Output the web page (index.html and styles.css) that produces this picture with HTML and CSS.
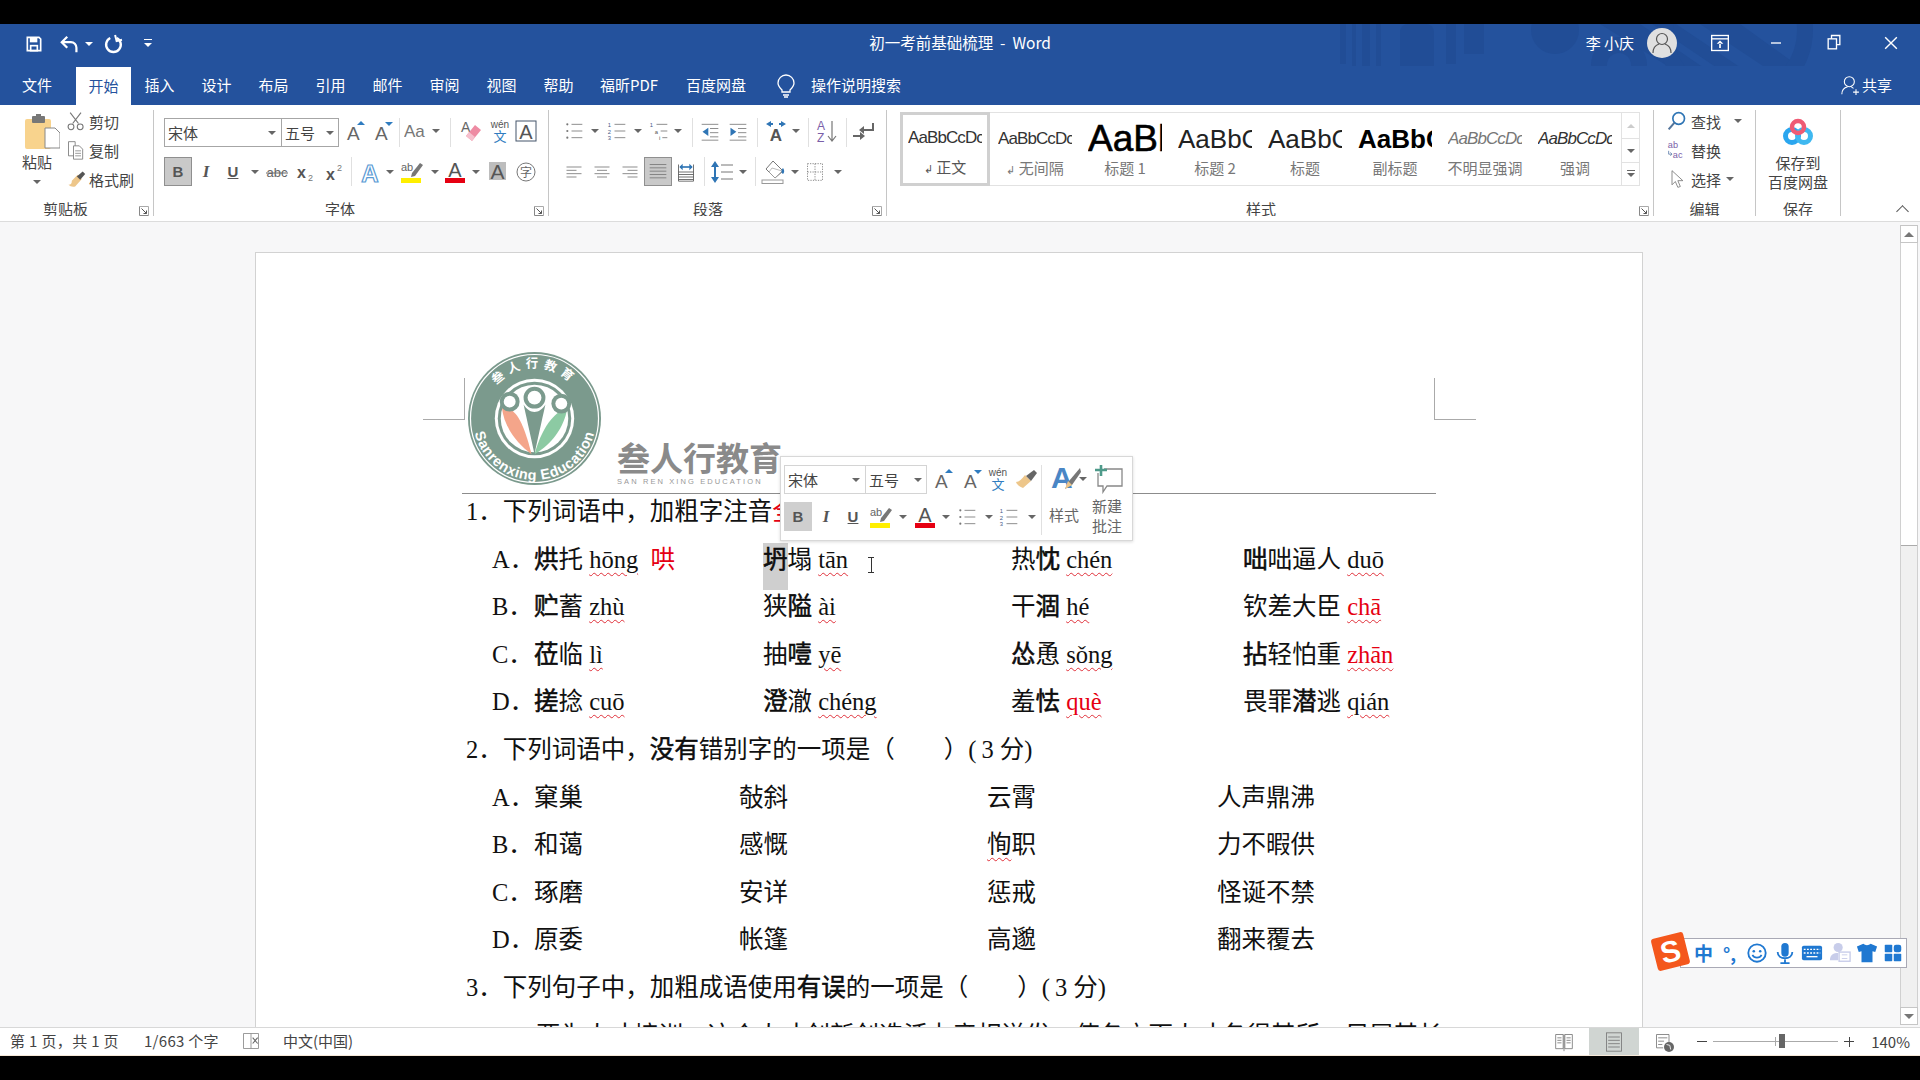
FILE: index.html
```html
<!DOCTYPE html>
<html lang="zh-CN">
<head>
<meta charset="utf-8">
<title>初一考前基础梳理 - Word</title>
<link rel="stylesheet" href="styles.css">
</head>
<body>
<svg class="defs" xmlns="http://www.w3.org/2000/svg">
  <defs>
    <symbol id="i-save" viewBox="0 0 24 24"><path d="M4 4h14l2 2v14H4z" fill="none" stroke="#fff" stroke-width="2"/><rect x="7" y="4" width="9" height="6" fill="#fff"/><rect x="8" y="14" width="8" height="6" fill="none" stroke="#fff" stroke-width="2"/></symbol>
    <symbol id="i-undo" viewBox="0 0 24 24"><path d="M9 4L3 10l6 6" fill="none" stroke="#fff" stroke-width="2.4"/><path d="M4 10h9a6 6 0 0 1 6 6v5" fill="none" stroke="#fff" stroke-width="2.4"/></symbol>
    <symbol id="i-redo" viewBox="0 0 24 24"><path d="M9 5.500a8 8 0 1 0 7 0" fill="none" stroke="#fff" stroke-width="2.600"/><path d="M15 2v7h6" fill="none" stroke="#fff" stroke-width="2.200" transform="rotate(-14 15 5)"/></symbol>
    <symbol id="i-grow" viewBox="0 0 24 24"><text x="3" y="21" class="t" font-size="19" fill="#666">A</text><path d="M17 2l4 4h-8z" fill="#2f7cc0"/></symbol>
    <symbol id="i-shrink" viewBox="0 0 24 24"><text x="3" y="21" class="t" font-size="19" fill="#666">A</text><path d="M13 3h8l-4 4z" fill="#2f7cc0"/></symbol>
    <symbol id="i-aa" viewBox="0 0 24 24"><text x="0" y="18" class="t" font-size="17" fill="#777">Aa</text></symbol>
    <symbol id="i-eraser" viewBox="0 0 24 24"><text x="1" y="13" class="t" font-size="14" fill="#666">A</text><path d="M15 6l6 5-9 11-6-5z" fill="#ee8ba3"/><path d="M6 17l6 5 3-4-6-5z" fill="#f6c0cd"/></symbol>
    <symbol id="i-wen" viewBox="0 0 24 24"><text x="12" y="9" class="t" font-size="10" fill="#555" text-anchor="middle">wén</text><text x="12" y="22" class="t" font-size="13" fill="#2f7cc0" text-anchor="middle">文</text></symbol>
    <symbol id="i-boxa" viewBox="0 0 24 24"><rect x="2" y="2" width="20" height="20" fill="none" stroke="#44546a" stroke-width="1"/><text x="12" y="20" class="t" font-size="20" fill="#555" text-anchor="middle">A</text></symbol>
    <symbol id="i-abc" viewBox="0 0 24 24"><text x="12" y="17" class="t" font-size="13" fill="#666" text-anchor="middle">abc</text><path d="M1 13h22" stroke="#666" stroke-width="1"/></symbol>
    <symbol id="i-sub" viewBox="0 0 24 24"><text x="2" y="18" class="t b" font-size="16" fill="#555">x</text><text x="13" y="21" class="t" font-size="9" fill="#777">2</text></symbol>
    <symbol id="i-sup" viewBox="0 0 24 24"><text x="2" y="20" class="t b" font-size="16" fill="#555">x</text><text x="13" y="11" class="t" font-size="9" fill="#777">2</text></symbol>
    <symbol id="i-ae" viewBox="0 0 24 24"><text x="12" y="22" class="t b" font-size="24" fill="#fff" stroke="#5b9bd5" stroke-width="1.200" text-anchor="middle">A</text></symbol>
    <symbol id="i-hl" viewBox="0 0 24 24"><text x="1" y="11" class="t" font-size="11" fill="#666">ab</text><path d="M20 3l3 2-8 11-4 1 1-4z" fill="#777"/><rect x="1" y="18" width="20" height="5" fill="#ffef00"/></symbol>
    <symbol id="i-ar" viewBox="0 0 24 24"><text x="12" y="17" class="t" font-size="20" fill="#555" text-anchor="middle">A</text><rect x="2" y="18" width="20" height="5" fill="#e60012"/></symbol>
    <symbol id="i-ag" viewBox="0 0 24 24"><rect x="4" y="2" width="17" height="18" fill="#bdbdbd"/><text x="12.500" y="19" class="t" font-size="21" fill="#555" text-anchor="middle">A</text></symbol>
    <symbol id="i-zi" viewBox="0 0 24 24"><circle cx="12" cy="12" r="9" fill="none" stroke="#777"/><text x="12" y="17" class="t" font-size="12" fill="#666" text-anchor="middle">字</text></symbol>
    <symbol id="i-bul" viewBox="0 0 24 24"><g fill="#777"><circle cx="4" cy="4" r="1.300"/><circle cx="4" cy="12" r="1.300"/><circle cx="4" cy="20" r="1.300"/></g><path d="M9 4h13M9 12h13M9 20h13" stroke="#777"/></symbol>
    <symbol id="i-num" viewBox="0 0 24 24"><g class="t" font-size="7" fill="#44598a"><text x="1" y="7">1</text><text x="1" y="15">2</text><text x="1" y="23">3</text></g><path d="M9 4h13M9 12h13M9 20h13" stroke="#777"/></symbol>
    <symbol id="i-ml" viewBox="0 0 24 24"><g class="t" font-size="7" fill="#44598a"><text x="1" y="7">1</text></g><g class="t" font-size="7" fill="#555"><text x="7" y="15">a</text><text x="12" y="23">i</text></g><path d="M9 4h13M14 12h8M16 20h6" stroke="#777"/></symbol>
    <symbol id="i-out" viewBox="0 0 24 24"><path d="M2 4h20M12 9h10M12 14h10M12 19h10M2 23h20" stroke="#777"/><path d="M10 8v10l-7-5z" fill="#2f75b5"/></symbol>
    <symbol id="i-ind" viewBox="0 0 24 24"><path d="M2 4h20M12 9h10M12 14h10M12 19h10M2 23h20" stroke="#777"/><path d="M3 8v10l7-5z" fill="#2f75b5"/></symbol>
    <symbol id="i-xl" viewBox="0 0 24 24"><text x="12" y="22" class="t b" font-size="17" fill="#555" text-anchor="middle">A</text><path d="M2 5l5-3v2h2v2H7v2zM22 5l-5-3v2h-2v2h2v2z" fill="#2f75b5"/></symbol>
    <symbol id="i-sort" viewBox="0 0 24 24"><text x="1" y="11" class="t" font-size="12" fill="#7a5ea8">A</text><text x="1" y="23" class="t" font-size="12" fill="#7a5ea8">Z</text><path d="M16 2v20M12 17l4 5 4-5" fill="none" stroke="#777" stroke-width="1.200"/></symbol>
    <symbol id="i-show" viewBox="0 0 24 24"><path d="M22 4v7H12" fill="none" stroke="#666" stroke-width="2"/><path d="M13 7l-5 4 5 4z" fill="#666"/><path d="M2 17h8" stroke="#666" stroke-width="2"/><path d="M9 13l5 4-5 4z" fill="#666"/></symbol>
    <symbol id="i-al" viewBox="0 0 24 24"><path d="M3 6h18M3 10h12M3 14h18M3 18h12" stroke="#777"/></symbol>
    <symbol id="i-ac" viewBox="0 0 24 24"><path d="M3 6h18M6 10h12M3 14h18M6 18h12" stroke="#777"/></symbol>
    <symbol id="i-ar2" viewBox="0 0 24 24"><path d="M3 6h18M9 10h12M3 14h18M9 18h12" stroke="#777"/></symbol>
    <symbol id="i-aj" viewBox="0 0 24 24"><path d="M2 3h20M2 7h20M2 11h20M2 15h20M2 19h20" stroke="#777"/></symbol>
    <symbol id="i-dist" viewBox="0 0 24 24"><path d="M3 3v20M21 3v20M3 12h18M3 15h18M3 18h18M3 21h18M3 23h18" stroke="#555"/><path d="M5 6h14" stroke="#2f75b5" stroke-width="2"/><path d="M8 2v8L4 6zM16 2v8l4-4z" fill="#2f75b5"/></symbol>
    <symbol id="i-ls" viewBox="0 0 24 24"><path d="M11 5h12M11 12h12M11 19h12" stroke="#777"/><path d="M5 6v12" stroke="#2f75b5" stroke-width="2"/><path d="M1 7l4-6 4 6zM1 17l4 6 4-6z" fill="#2f75b5"/></symbol>
    <symbol id="i-fill" viewBox="0 0 24 24"><path d="M12 1l10 10-8 7-9-9z" fill="#fff" stroke="#777"/><path d="M11 8l10 3-7 7-6-6z" fill="#fff" stroke="#777" stroke-width=".5"/><path d="M22 8c2 3 1 5 0 6-2-1-2-4 0-6z" fill="#2f75b5"/><rect x="1" y="20" width="21" height="3.500" fill="#fff" stroke="#999"/></symbol>
    <symbol id="i-bd" viewBox="0 0 24 24"><path d="M3 2h18v20H3zM12 2v20M3 12h18" fill="none" stroke="#777" stroke-dasharray="1.500 1.500"/></symbol>
    <symbol id="i-paste" viewBox="0 0 36 36"><rect x="1" y="5" width="26" height="30" rx="2" fill="#f8d38d"/><rect x="8" y="2" width="13" height="7" rx="1" fill="#777"/><rect x="12" y="0" width="5" height="4" fill="#777"/><path d="M21 20h10l5 5v15H21z" fill="#fff" stroke="#888" transform="translate(0 -6)"/></symbol>
    <symbol id="i-cut" viewBox="0 0 24 24"><path d="M5 2l10 13M18 2L8 15" stroke="#777" stroke-width="1.400" fill="none"/><circle cx="6" cy="19" r="3.500" fill="none" stroke="#777" stroke-width="1.300"/><circle cx="17" cy="19" r="3.500" fill="none" stroke="#777" stroke-width="1.300"/></symbol>
    <symbol id="i-copy" viewBox="0 0 24 24"><path d="M3 2h8v17H3z" fill="#fff" stroke="#777"/><path d="M9 7h7l4 4v12H9z" fill="#fff" stroke="#777"/><path d="M11 13h7M11 16h7M11 19h7" stroke="#888"/></symbol>
    <symbol id="i-brush" viewBox="0 0 24 24"><path d="M14 7l5 5-8 9c-3 1-6 0-8-2 3 0 4-2 4-5z" fill="#edc68a"/><path d="M13 9l4 4 6-7-3-3z" fill="#555"/></symbol>
    <symbol id="i-launch" viewBox="0 0 10 10"><path d="M.5.5h9v9" fill="none" stroke="#aaa"/><path d="M.5.500v9h9" fill="none" stroke="#888"/><path d="M2.500 2.500l5 5M7.500 4.500v3h-3" fill="none" stroke="#555"/></symbol>
    <symbol id="i-find" viewBox="0 0 24 24"><circle cx="14" cy="9" r="7" fill="none" stroke="#2f75b5" stroke-width="2"/><path d="M9 14l-7 8" stroke="#54759b" stroke-width="2.500"/></symbol>
    <symbol id="i-rep" viewBox="0 0 24 24"><text x="1" y="10" class="t" font-size="11" fill="#7a5ea8">ab</text><text x="7" y="21" class="t" font-size="11" fill="#7a5ea8">ac</text><path d="M2 13v4h4M4 15l2 2-2 2" fill="none" stroke="#5c7ca8"/></symbol>
    <symbol id="i-sel" viewBox="0 0 24 24"><path d="M6 2v17l4-4 3 7 3-1-3-7h6z" fill="#fff" stroke="#777"/></symbol>
    <symbol id="i-baidu" viewBox="0 0 30 30"><circle cx="9" cy="19" r="6.500" fill="none" stroke="#2aa6ef" stroke-width="5"/><circle cx="21" cy="19" r="6.500" fill="none" stroke="#3fb8f0" stroke-width="5"/><circle cx="15" cy="10" r="6" fill="none" stroke="#ef5b74" stroke-width="4.500"/></symbol>
    <symbol id="i-bulb" viewBox="0 0 24 24"><path d="M8 16c-2-2-4-4-4-7a8 8 0 0 1 16 0c0 3-2 5-4 7v2H8z" fill="none" stroke="#fff" stroke-width="1.300"/><path d="M9 21h6M10 23h4" stroke="#fff" stroke-width="1.300"/></symbol>
    <symbol id="i-share" viewBox="0 0 24 24"><circle cx="10" cy="8" r="6" fill="none" stroke="#fff" stroke-width="1.300"/><path d="M1 23c0-5 3-8 7-9M12 14l3 2" fill="none" stroke="#fff" stroke-width="1.300"/><path d="M18 17v7M14.500 20.500h7" stroke="#fff" stroke-width="1.300"/></symbol>
    <symbol id="i-user" viewBox="0 0 30 30"><circle cx="15" cy="15" r="15" fill="#e0e0e0"/><circle cx="15" cy="11" r="5.500" fill="none" stroke="#555" stroke-width="1.200"/><path d="M6 25c0-5 3-8 6-9M24 25c0-5-3-8-6-9" fill="none" stroke="#555" stroke-width="1.200"/></symbol>
    <symbol id="i-rd" viewBox="0 0 24 24"><rect x="2" y="3" width="20" height="18" fill="none" stroke="#fff" stroke-width="1.600"/><path d="M2 7h20" stroke="#fff" stroke-width="1.600"/><path d="M12 9l-4 4h8zM11 12h2v6h-2z" fill="#fff"/></symbol>
    <symbol id="i-min" viewBox="0 0 24 24"><path d="M6 12h12" stroke="#fff" stroke-width="1.600"/></symbol>
    <symbol id="i-rest" viewBox="0 0 24 24"><path d="M9 7V3h10v11h-4" fill="none" stroke="#fff" stroke-width="1.600"/><rect x="5" y="7" width="10" height="12" fill="none" stroke="#fff" stroke-width="1.600"/></symbol>
    <symbol id="i-x" viewBox="0 0 24 24"><path d="M5 5l14 14M19 5L5 19" stroke="#fff" stroke-width="1.700"/></symbol>
    <symbol id="i-book" viewBox="0 0 24 24"><path d="M2 3h9v17H2zM13 3h9v17h-9z" fill="none" stroke="#777"/><path d="M4 7h5M4 10h5M4 13h5M15 7h5M15 10h5M15 13h5M12 3v20" stroke="#777"/></symbol>
    <symbol id="i-pr" viewBox="0 0 24 24"><rect x="3" y="1" width="18" height="22" fill="none" stroke="#777"/><path d="M5 6h14M5 10h14M5 14h14M5 18h14" stroke="#777"/></symbol>
    <symbol id="i-web" viewBox="0 0 24 24"><path d="M3 3h15v10M3 3v16h8" fill="none" stroke="#777"/><path d="M5 7h11M5 11h7M5 15h5" stroke="#777"/><circle cx="18" cy="18" r="6" fill="#666"/><path d="M15 15l4 1 1 5" stroke="#fff" fill="none"/></symbol>
    <symbol id="i-proof" viewBox="0 0 24 24"><path d="M12 3H3v18h9zM12 3h9v18h-9" fill="none" stroke="#888"/><path d="M14 8l6 7M20 8l-6 7" stroke="#666" stroke-width="1.300"/></symbol>
    <symbol id="i-sty" viewBox="0 0 30 30"><text x="0" y="24" class="t b" font-size="30" fill="#4a86c5">A</text><path d="M29 4l-11 13-4 8 7-4L30 8z" fill="#777"/><path d="M14 25l7-4-4-4z" fill="#edc68a"/></symbol>
    <symbol id="i-com" viewBox="0 0 30 30"><path d="M10 5h18v17H13l-4 6v-6H4V9" fill="none" stroke="#888" stroke-width="1.300"/><path d="M7 1v11M1 6h12" stroke="#4e9a8a" stroke-width="2.600"/></symbol>
    <symbol id="i-mini-brush" viewBox="0 0 24 24"><path d="M11 8l6 6-8 7c-3-1-6-3-7-6 3 0 6-3 9-7z" fill="#edc68a"/><path d="M12 9l5 5 6-8-3-3z" fill="#666"/></symbol>
    <symbol id="i-smile" viewBox="0 0 24 24"><circle cx="12" cy="12" r="9.500" fill="none" stroke="#1f78d1" stroke-width="2"/><circle cx="8.500" cy="10" r="1.400" fill="#1f78d1"/><circle cx="15.500" cy="10" r="1.400" fill="#1f78d1"/><path d="M7 14c2 4 8 4 10 0" fill="none" stroke="#1f78d1" stroke-width="1.800"/></symbol>
    <symbol id="i-mic" viewBox="0 0 24 24"><rect x="8" y="1" width="8" height="15" rx="4" fill="#1f78d1"/><path d="M4 11c0 9 16 9 16 0M12 19v4M7 23h10" fill="none" stroke="#1f78d1" stroke-width="2"/></symbol>
    <symbol id="i-kb" viewBox="0 0 24 24"><rect x="1" y="4" width="22" height="16" rx="2" fill="#1f78d1"/><path d="M3 8h18M3 12h18" stroke="#fff" stroke-dasharray="2 1.500" stroke-width="1.500"/><path d="M6 16h12" stroke="#fff" stroke-width="1.500"/></symbol>
    <symbol id="i-sg-u" viewBox="0 0 24 24"><circle cx="10" cy="6" r="5" fill="#c8cdea"/><path d="M1 20c0-6 4-8 9-8v8z" fill="#c8cdea"/><rect x="11" y="11" width="12" height="10" fill="#fff" stroke="#c8cdea" stroke-width="1.500"/><path d="M14 14h6M14 18h6" stroke="#c8cdea"/></symbol>
    <symbol id="i-shirt" viewBox="0 0 24 24"><path d="M8 2c2 2 6 2 8 0l7 3-2 6-3-1v12H6V10l-3 1-2-6z" fill="#1f78d1"/></symbol>
    <symbol id="i-grid" viewBox="0 0 24 24"><g fill="#1f78d1"><rect x="1" y="1" width="10" height="10" rx="1"/><rect x="13" y="1" width="10" height="10" rx="3"/><rect x="1" y="13" width="10" height="10" rx="1"/><rect x="13" y="13" width="10" height="10" rx="1"/></g></symbol>
  </defs>
</svg>

<div class="app">
  <div class="black-top"></div>

  <header class="titlebar">
    <svg class="watermark" viewBox="0 0 580 81" aria-hidden="true">
      <g fill="#214d96">
        <rect x="0" y="0" width="6" height="40"/><rect x="12" y="0" width="4" height="52"/><rect x="22" y="0" width="8" height="62"/><rect x="36" y="0" width="5" height="50"/>
        <rect x="60" y="0" width="34" height="62" rx="8"/><rect x="106" y="0" width="10" height="40"/><rect x="124" y="0" width="20" height="30"/><circle cx="215" cy="6" r="24"/>
        <circle cx="279" cy="41" r="28"/><path d="M260 0l130 81h28L300 0zM312 0l120 81h24L336 0zM360 0l90 60v-24L400 0z"/>
      </g>
      <circle cx="279" cy="41" r="12" fill="#24529d"/>
      <circle cx="395" cy="6" r="70" fill="none" stroke="#214d96" stroke-width="16"/>
    </svg>
    <div class="qat">
      <span class="c w24"><svg class="s20"><use href="#i-save"/></svg></span>
      <span class="c w10"></span><span class="c w28"><svg class="s22"><use href="#i-undo"/></svg></span>
      <span class="c w10"><i class="dd dd-w"></i></span>
      <span class="c w38"><svg class="s22"><use href="#i-redo"/></svg></span>
      <span class="c w32"><i class="qat-more"></i></span>
    </div>
    <div class="doc-title">初一考前基础梳理&nbsp; - &nbsp;Word</div>
    <div class="winctl">
      <span class="user">李 小庆</span>
      <span class="c w30"><svg class="s30"><use href="#i-user"/></svg></span>
      <span class="c w86"><svg class="s20"><use href="#i-rd"/></svg></span>
      <span class="c w26"><svg class="s20"><use href="#i-min"/></svg></span>
      <span class="c w90"><svg class="s20"><use href="#i-rest"/></svg></span>
      <span class="c w24"><svg class="s20"><use href="#i-x"/></svg></span>
    </div>
  </header>

  <nav class="tabs">
    <span class="tab tab-file">文件</span>
    <span class="tab tab-active">开始</span>
    <span class="tab">插入</span><span class="tab">设计</span><span class="tab">布局</span><span class="tab">引用</span>
    <span class="tab">邮件</span><span class="tab">审阅</span><span class="tab">视图</span><span class="tab">帮助</span>
    <span class="tab tab-foxit">福昕PDF</span>
    <span class="tab tab-baidu">百度网盘</span>
    <span class="c w50"><svg class="s24"><use href="#i-bulb"/></svg></span>
    <span class="tell">操作说明搜索</span>
    <span class="share"><svg class="s20"><use href="#i-share"/></svg>共享</span>
  </nav>

  <section class="ribbon">
    <div class="group g-clip">
      <div class="clip-body">
        <div class="paste">
          <svg class="s36"><use href="#i-paste"/></svg>
          <span class="paste-label">粘贴</span>
          <i class="dd"></i>
        </div>
        <div class="clip-list">
          <div class="clip-item"><svg class="s20"><use href="#i-cut"/></svg><span>剪切</span></div>
          <div class="clip-item"><svg class="s20"><use href="#i-copy"/></svg><span>复制</span></div>
          <div class="clip-item"><svg class="s20"><use href="#i-brush"/></svg><span>格式刷</span></div>
        </div>
      </div>
      <div class="glabel lbl-clip">剪贴板</div>
      <svg class="launch"><use href="#i-launch"/></svg>
    </div>

    <div class="group g-font">
      <div class="rows">
        <div class="row row-up">
          <div class="combo w118"><span>宋体</span><i class="dd"></i></div>
          <div class="combo combo-next w58"><span>五号</span><i class="dd"></i></div>
          <span class="c w33"><svg class="s24"><use href="#i-grow"/></svg></span>
          <span class="c w24"><svg class="s24"><use href="#i-shrink"/></svg></span>
          <span class="c w3"></span><i class="vsep"></i>
          <span class="c w31"><svg class="s24"><use href="#i-aa"/></svg></span>
          <span class="c w10"><i class="dd"></i></span>
          <span class="c w9"></span><i class="vsep"></i>
          <span class="c w41"><svg class="s24"><use href="#i-eraser"/></svg></span>
          <span class="c w16"><svg class="s24"><use href="#i-wen"/></svg></span>
          <span class="c w35"><svg class="s24"><use href="#i-boxa"/></svg></span>
        </div>
        <div class="row">
          <span class="c w28 on b-ic">B</span>
          <span class="c w28 i-ic">I</span>
          <span class="c w26 u-ic">U</span>
          <span class="c w18"><i class="dd"></i></span>
          <span class="c w26"><svg class="s24"><use href="#i-abc"/></svg></span>
          <span class="c w34"><svg class="s24"><use href="#i-sub"/></svg></span>
          <span class="c w24"><svg class="s24"><use href="#i-sup"/></svg></span>
          <span class="c w3"></span><i class="vsep"></i>
          <span class="c w36"><svg class="s24"><use href="#i-ae"/></svg></span>
          <span class="c w4"><i class="dd"></i></span>
          <span class="c w40"><svg class="s24"><use href="#i-hl"/></svg></span>
          <span class="c w6"><i class="dd"></i></span>
          <span class="c w34"><svg class="s24"><use href="#i-ar"/></svg></span>
          <span class="c w8"><i class="dd"></i></span>
          <span class="c w34"><svg class="s24"><use href="#i-ag"/></svg></span>
          <span class="c w24"><svg class="s24"><use href="#i-zi"/></svg></span>
        </div>
      </div>
      <div class="glabel">字体</div>
      <svg class="launch"><use href="#i-launch"/></svg>
    </div>

    <div class="group g-para">
      <div class="rows">
        <div class="row row-up">
          <span class="c w28"><svg class="s20"><use href="#i-bul"/></svg></span><span class="c w14"><i class="dd"></i></span>
          <span class="c w30"><svg class="s20"><use href="#i-num"/></svg></span><span class="c w12"><i class="dd"></i></span>
          <span class="c w30"><svg class="s20"><use href="#i-ml"/></svg></span><span class="c w8"><i class="dd"></i></span>
          <span class="c w10"></span><i class="vsep"></i>
          <span class="c w34"><svg class="s20"><use href="#i-out"/></svg></span>
          <span class="c w22"><svg class="s20"><use href="#i-ind"/></svg></span>
          <span class="c w8"></span><i class="vsep"></i>
          <span class="c w35"><svg class="s24"><use href="#i-xl"/></svg></span><span class="c w5"><i class="dd"></i></span>
          <span class="c w10"></span><i class="vsep"></i>
          <span class="c w37"><svg class="s24"><use href="#i-sort"/></svg></span><i class="vsep"></i>
          <span class="c w32"><svg class="s24"><use href="#i-show"/></svg></span>
        </div>
        <div class="row">
          <span class="c w28"><svg class="s20"><use href="#i-al"/></svg></span>
          <span class="c w28"><svg class="s20"><use href="#i-ac"/></svg></span>
          <span class="c w28"><svg class="s20"><use href="#i-ar2"/></svg></span>
          <span class="c w28 on"><svg class="s20"><use href="#i-aj"/></svg></span>
          <span class="c w28"><svg class="s20"><use href="#i-dist"/></svg></span>
          <span class="c w4"></span><i class="vsep"></i>
          <span class="c w34"><svg class="s24"><use href="#i-ls"/></svg></span><span class="c w8"><i class="dd"></i></span>
          <span class="c w8"></span><i class="vsep"></i>
          <span class="c w34"><svg class="s24"><use href="#i-fill"/></svg></span><span class="c w10"><i class="dd"></i></span>
          <span class="c w30"><svg class="s20"><use href="#i-bd"/></svg></span><span class="c w16"><i class="dd"></i></span>
        </div>
      </div>
      <div class="glabel">段落</div>
      <svg class="launch"><use href="#i-launch"/></svg>
    </div>

    <div class="group g-styles">
      <div class="gallery">
        <div class="sty sty-on"><div class="prev p-body">AaBbCcDc</div><div class="sty-l"><small>↲</small> 正文</div></div>
        <div class="sty"><div class="prev p-body">AaBbCcDc</div><div class="sty-l"><small>↲</small> 无间隔</div></div>
        <div class="sty"><div class="prev p-h1">AaBbCcDc</div><div class="sty-l">标题 1</div></div>
        <div class="sty"><div class="prev p-h2">AaBbCcDc</div><div class="sty-l">标题 2</div></div>
        <div class="sty"><div class="prev p-h2">AaBbCcDc</div><div class="sty-l">标题</div></div>
        <div class="sty"><div class="prev p-h2 p-bold">AaBbCcDc</div><div class="sty-l">副标题</div></div>
        <div class="sty"><div class="prev p-body p-soft">AaBbCcDc</div><div class="sty-l">不明显强调</div></div>
        <div class="sty"><div class="prev p-body p-it">AaBbCcDc</div><div class="sty-l">强调</div></div>
        <div class="gal-scroll">
          <span class="gs gs-a"><i class="dd dd-up dd-faint"></i></span>
          <span class="gs gs-b"><i class="dd"></i></span>
          <span class="gs gs-c"><i class="gal-more"></i></span>
        </div>
      </div>
      <div class="glabel">样式</div>
      <svg class="launch"><use href="#i-launch"/></svg>
    </div>

    <div class="group g-edit">
      <div class="edit-list">
        <div class="edit-item"><svg class="s20"><use href="#i-find"/></svg><span>查找</span><i class="dd dd-gap"></i></div>
        <div class="edit-item"><svg class="s20"><use href="#i-rep"/></svg><span>替换</span></div>
        <div class="edit-item"><svg class="s20"><use href="#i-sel"/></svg><span>选择</span><i class="dd"></i></div>
      </div>
      <div class="glabel">编辑</div>
    </div>

    <div class="group g-save">
      <div class="save-body">
        <svg class="s30"><use href="#i-baidu"/></svg>
        <span class="save-t">保存到<br>百度网盘</span>
      </div>
      <div class="glabel">保存</div>
    </div>

    <i class="collapse"></i>
  </section>

  <main class="docarea">
    <div class="canvas">
      <article class="page">
        <i class="crop crop-l"></i>
        <i class="crop crop-r"></i>
        <div class="head">
          <svg class="logo" viewBox="0 0 134 136" aria-label="叁人行教育">
            <defs>
              <path id="arc-top" d="M16 68a51 51 0 0 1 102 0"/>
              <path id="arc-bot" d="M5 68a62 62 0 0 0 124 0"/>
            </defs>
            <circle cx="67" cy="68" r="67" fill="#7b9a8d"/>
            <circle cx="67" cy="68" r="64.500" fill="none" stroke="#fff" stroke-width="1.200"/>
            <circle cx="67" cy="68" r="40" fill="#fff"/>
            <circle cx="67" cy="68" r="37" fill="#7b9a8d"/>
            <circle cx="67" cy="68" r="34" fill="#fff"/>
            <text class="logo-cn"><textPath href="#arc-top" startOffset="50%" text-anchor="middle">叁人行教育</textPath></text>
            <text class="logo-en"><textPath href="#arc-bot" startOffset="50%" text-anchor="middle">Sanrenxing Education</textPath></text>
            <g transform="translate(0 6)">
              <path d="M34 50c12 2 20 8 30 48-16-12-28-28-30-48z" fill="#f4a58a"/>
              <path d="M100 52c-10 2-24 14-33 46 18-10 30-28 33-46z" fill="#8ccaa3"/>
              <path d="M56 48c6 10 16 10 22 0-4 18-8 36-11 50-3-14-7-32-11-50z" fill="#7b9a8d"/>
              <circle cx="42" cy="45" r="10" fill="#7b9a8d"/><circle cx="67" cy="41" r="11" fill="#7b9a8d"/><circle cx="94" cy="47" r="10" fill="#7b9a8d"/>
              <circle cx="42" cy="45" r="6" fill="#fff"/><circle cx="67" cy="41" r="7" fill="#fff"/><circle cx="94" cy="47" r="6" fill="#fff"/>
            </g>
          </svg>
          <div class="mark">
            <div class="mark-cn">叁人行教育</div>
            <div class="mark-en">SAN REN XING EDUCATION</div>
          </div>
        </div>

        <div class="text">
          <p class="line">1．下列词语中，加粗字注音<span class="red">全都正确</span>的一项是（<span class="blank"></span>）<span class="lp">(</span>3 分)</p>
          <div class="opts o1">
            <span>A．</span><span><b>烘</b>托 <u class="sq">hōng</u> <span class="red">&nbsp;哄</span></span><span><span class="sel"><b>坍</b></span>塌 <u class="sq">tān</u></span><span>热<b>忱</b> <u class="sq">chén</u></span><span><b>咄</b>咄逼人 <u class="sq">duō</u></span>
            <span>B．</span><span><b>贮</b>蓄 <u class="sq">zhù</u></span><span>狭<b>隘</b> <u class="sq">ài</u></span><span>干<b>涸</b> <u class="sq">hé</u></span><span>钦差大臣 <u class="sq red">chā</u></span>
            <span>C．</span><span><b>莅</b>临 <u class="sq">lì</u></span><span>抽<b>噎</b> <u class="sq">yē</u></span><span><b>怂</b>恿 <u class="sq">sǒng</u></span><span><b>拈</b>轻怕重 <u class="sq red">zhān</u></span>
            <span>D．</span><span><b>搓</b>捻 <u class="sq">cuō</u></span><span><b>澄</b>澈 <u class="sq">chéng</u></span><span>羞<b>怯</b> <u class="sq red">què</u></span><span>畏罪<b>潜</b>逃 <u class="sq">qián</u></span>
          </div>
          <p class="line">2．下列词语中，<b>没有</b>错别字的一项是（<span class="blank"></span>）<span class="lp">(</span>3 分)</p>
          <div class="opts o2">
            <span>A．</span><span>窠巢</span><span>敧斜</span><span>云霄</span><span>人声鼎沸</span>
            <span>B．</span><span>和蔼</span><span>感慨</span><span><u class="sq">恂</u>职</span><span>力不暇供</span>
            <span>C．</span><span>琢磨</span><span>安详</span><span>惩戒</span><span>怪诞不禁</span>
            <span>D．</span><span>原委</span><span>帐篷</span><span>高邈</span><span>翻来覆去</span>
          </div>
          <p class="line">3．下列句子中，加粗成语使用<b>有误</b>的一项是（<span class="blank"></span>）<span class="lp">(</span>3 分)</p>
          <p class="line line-cut">要为人才培训，这个人才创新创造活力竞相迸发，使各方面人才各得其所，尽展其长</p>
        </div>
      </article>
    </div>
    <aside class="vscroll">
      <span class="sb-btn"><i class="tri-up"></i></span>
      <span class="sb-thumb"></span>
      <span class="sb-track"></span>
      <span class="sb-btn"><i class="tri-down"></i></span>
    </aside>
  </main>

  <footer class="status">
    <span class="st st-page">第 1 页，共 1 页</span>
    <span class="st st-count">1/663 个字</span>
    <svg class="s20 st-proof"><use href="#i-proof"/></svg>
    <span class="st st-lang">中文(中国)</span>
    <div class="st-right">
      <span class="c w50"><svg class="s20"><use href="#i-book"/></svg></span>
      <span class="c w50 st-on"><svg class="s20"><use href="#i-pr"/></svg></span>
      <span class="c w50"><svg class="s20"><use href="#i-web"/></svg></span>
      <span class="zoom-minus"></span>
      <span class="slider"><i class="slider-mid"></i><i class="slider-thumb"></i></span>
      <span class="zoom-plus"></span>
      <span class="st st-zoom">140%</span>
    </div>
  </footer>
  <div class="black-bottom"></div>

  <!-- floating mini toolbar -->
  <div class="mini">
    <div class="row row-up-s">
      <div class="combo combo-m w82"><span>宋体</span><i class="dd"></i></div>
      <div class="combo combo-m combo-next w62"><span>五号</span><i class="dd"></i></div>
      <span class="c w34"><svg class="s24"><use href="#i-grow"/></svg></span>
      <span class="c w24"><svg class="s24"><use href="#i-shrink"/></svg></span>
      <span class="c w26"><svg class="s24"><use href="#i-wen"/></svg></span>
      <span class="c w30"><svg class="s24"><use href="#i-mini-brush"/></svg></span>
      <i class="vsep vsep-l"></i>
      <span class="c w36 sty-cell"><svg class="s30"><use href="#i-sty"/></svg></span>
      <span class="c w10"><i class="dd"></i></span>
      <span class="c w42"><svg class="s30"><use href="#i-com"/></svg></span>
    </div>
    <div class="row">
      <span class="c w28 on-soft b-ic">B</span>
      <span class="c w28 i-ic">I</span>
      <span class="c w26 u-ic">U</span>
      <span class="c w30"><svg class="s24"><use href="#i-hl"/></svg></span><span class="c w14"><i class="dd"></i></span>
      <span class="c w30"><svg class="s24"><use href="#i-ar"/></svg></span><span class="c w12"><i class="dd"></i></span>
      <span class="c w30"><svg class="s20"><use href="#i-bul"/></svg></span><span class="c w14"><i class="dd"></i></span>
      <span class="c w26"><svg class="s20"><use href="#i-num"/></svg></span><span class="c w20"><i class="dd"></i></span>
      <span class="c w44 mini-t">样式</span>
      <span class="c w42 mini-t mini-2">新建<br>批注</span>
    </div>
  </div>
  <i class="ibeam"></i>

  <!-- input method bar -->
  <div class="ime">
    <span class="ime-s">S</span>
    <span class="ime-zh">中</span>
    <span class="ime-p">°,</span>
    <svg class="s22"><use href="#i-smile"/></svg>
    <svg class="s22"><use href="#i-mic"/></svg>
    <svg class="s22"><use href="#i-kb"/></svg>
    <svg class="s22"><use href="#i-sg-u"/></svg>
    <svg class="s22"><use href="#i-shirt"/></svg>
    <svg class="s18"><use href="#i-grid"/></svg>
  </div>
</div>
</body>
</html>
```

FILE: styles.css
```css
* { box-sizing: border-box; }
html, body { margin: 0; padding: 0; background: #000; }
body { font-family: "Noto Sans CJK SC", "Noto Sans", sans-serif; font-size: 15px; color: #444; }
.defs { position: absolute; width: 0; height: 0; }
.t { font-family: "Liberation Sans", "Noto Sans CJK SC", sans-serif; }
.b { font-weight: 700; }
i { display: block; font-style: normal; }

.app { position: relative; width: 1920px; height: 1080px; display: flex; flex-direction: column; overflow: hidden; }
.black-top { height: 24px; background: #000; flex: none; }
.black-bottom { flex: 1; background: #000; border-top: 1px solid #f6e8d8; }

/* helper cell widths */
.c { display: flex; align-items: center; justify-content: center; flex: none; height: 100%; }
.w3{width:3px}.w4{width:4px}.w5{width:5px}.w6{width:6px}.w8{width:8px}.w9{width:9px}.w10{width:10px}.w12{width:12px}.w14{width:14px}.w16{width:16px}.w18{width:18px}.w20{width:20px}
.w22{width:22px}.w24{width:24px}.w26{width:26px}.w28{width:28px}.w30{width:30px}.w31{width:31px}.w32{width:32px}.w33{width:33px}.w34{width:34px}.w35{width:35px}.w36{width:36px}.w37{width:37px}.w38{width:38px}.w40{width:40px}.w41{width:41px}
.w42{width:42px}.w44{width:44px}.w50{width:50px}.w58{width:58px}.w62{width:62px}.w82{width:82px}.w86{width:86px}.w90{width:90px}.w118{width:118px}
.s18{width:18px;height:18px;flex:none}.s20{width:20px;height:20px;flex:none}.s22{width:22px;height:22px;flex:none}.s24{width:24px;height:24px;flex:none}.s30{width:30px;height:30px;flex:none}.s36{width:36px;height:36px;flex:none}

.dd { width: 0; height: 0; flex: none; border-left: 4px solid transparent; border-right: 4px solid transparent; border-top: 4px solid #666; }
.dd-w { border-top-color: #fff; }
.dd-up { border-top: 0; border-bottom: 4px solid #666; }
.dd-faint { border-bottom-color: #ccc; }

/* title bar */
.titlebar { position: relative; height: 42px; flex: none; background: #24529d; color: #fff; display: grid; grid-template-columns: 1fr auto 1fr; align-items: center; overflow: hidden; }
.watermark { position: absolute; left: 1340px; top: 0; width: 580px; height: 81px; }
.qat { position: relative; display: flex; align-items: center; height: 38px; padding-left: 22px; margin-bottom: 3px; }
.qat-more { width: 8px; height: 9px; border-top: 1px solid #fff; position: relative; }
.qat-more::after { content: ""; position: absolute; left: 0; top: 3px; border-left: 4px solid transparent; border-right: 4px solid transparent; border-top: 4px solid #fff; }
.doc-title { position: relative; font-size: 15.500px; line-height: 20px; margin-bottom: 6px; white-space: nowrap; }
.winctl { position: relative; display: flex; align-items: center; justify-content: flex-end; height: 36px; padding-right: 17px; margin-bottom: 5px; }
.user { font-size: 15px; margin-right: 13px; white-space: nowrap; }

/* tabs */
.tabs { height: 39px; flex: none; background: #24529d; color: #fff; display: flex; align-items: stretch; padding-left: 8px; position: relative; }
.tab { width: 57px; flex: none; display: flex; align-items: center; justify-content: center; padding-bottom: 3px; }
.tab-file { width: 58px; margin-right: 10px; }
.tab-active { width: 55px; margin-top: 1px; padding-bottom: 2px; background: #fff; color: #24529d; }
.tab-foxit { width: 84px; }
.tab-baidu { width: 90px; }
.tell { display: flex; align-items: center; white-space: nowrap; padding-bottom: 2px; }
.share { margin-left: auto; margin-right: 28px; display: flex; align-items: center; gap: 1px; padding-bottom: 2px; }

/* ribbon */
.ribbon { position: relative; height: 117px; flex: none; background: #fff; border-bottom: 1px solid #dcdcdc; padding-top: 5px; display: flex; align-items: flex-start; }
.group { position: relative; height: 106px; flex: none; border-right: 1px solid #c6c6c6; overflow: hidden; display: flex; flex-direction: column; }
.g-clip { width: 154px; } .g-font { width: 395px; padding-left: 10px; } .g-para { width: 338px; padding-left: 11px; }
.g-styles { width: 767px; padding-left: 13px; } .g-edit { width: 102px; } .g-save { width: 85px; }
.rows { display: flex; flex-direction: column; gap: 10px; padding-top: 8px; height: 76px; flex: none; }
.row { display: flex; height: 29px; align-items: stretch; flex: none; }
.row-up .c { padding-bottom: 3px; }
.row-up-s .c { padding-bottom: 1px; }
.vsep { width: 1px; flex: none; background: #e0e0e0; height: 29px; }
.vsep-l { height: 70px; }
.glabel { margin-top: auto; margin-bottom: -4px; height: 23px; line-height: 20px; text-align: center; color: #444; font-size: 15px; flex: none; padding-top: 2px; white-space: nowrap; }
.g-font .glabel { padding-right: 22px; margin-left: -10px; }
.g-para .glabel { padding-right: 19px; margin-left: -11px; }
.g-styles .glabel { padding-right: 18px; margin-left: -13px; }
.lbl-clip { padding-right: 22px; }
.launch { position: absolute; right: 4px; bottom: 0; width: 10px; height: 10px; }

.combo { display: flex; align-items: center; justify-content: space-between; flex: none; border: 1px solid #a6a6a6; padding: 0 5px 0 3px; color: #444; font-size: 15px; }
.combo-next { border-left: 1px solid #a6a6a6; margin-left: -1px; padding-right: 4px; }
.on { background: #c9c9c9; border: 1px solid #8f8f8f; }
.on-soft { background: #cfcfcf; }
.b-ic { font-family: "Liberation Sans", sans-serif; font-weight: 700; font-size: 15px; color: #555; }
.i-ic { font-family: "Liberation Serif", serif; font-weight: 700; font-style: italic; font-size: 17px; color: #555; }
.u-ic { font-family: "Liberation Sans", sans-serif; font-weight: 700; font-size: 15px; color: #555; text-decoration: underline; }

/* clipboard */
.clip-body { display: flex; height: 83px; flex: none; }
.paste { width: 56px; margin-left: 9px; display: flex; flex-direction: column; align-items: center; padding-top: 4px; }
.paste .s36 { margin-left: 10px; }
.paste-label { margin-top: 1px; line-height: 22px; }
.paste .dd { margin-top: 7px; }
.clip-list { display: flex; flex-direction: column; gap: 9px; padding-top: 1px; margin-left: 1px; }
.clip-item { display: flex; align-items: center; height: 20px; gap: 3px; white-space: nowrap; color: #444; }

/* styles gallery */
.gallery { display: flex; width: 740px; height: 74px; margin-top: 2px; border: 1px solid #e2e2e2; flex: none; }
.sty { width: 90px; flex: none; display: flex; flex-direction: column; align-items: center; padding-top: 7px; }
.sty-on { border: 3px solid #d0d0d0; padding-top: 4px; margin: -1px 0 -1px -1px; height: 74px; }
.prev { width: 74px; height: 38px; overflow: hidden; white-space: nowrap; line-height: 38px; color: #222; font-family: "Liberation Sans", sans-serif; text-align: left; flex: none; }
.p-body { font-size: 17px; letter-spacing: -.9px; color: #333; }
.p-h1 { font-size: 37px; color: #000; -webkit-text-stroke: .6px #000; }
.p-h2 { font-size: 26px; }
.p-bold { font-weight: 700; color: #000; }
.p-soft { font-style: italic; color: #777; }
.p-it { font-style: italic; }
.sty-l { margin-top: -1px; line-height: 22px; color: #777; white-space: nowrap; }
.sty-on .sty-l { color: #555; }
.sty-l small { font-size: 11px; }
.gal-scroll { width: 18px; margin-left: auto; display: flex; flex-direction: column; border-left: 1px solid #e2e2e2; }
.gs { display: flex; align-items: center; justify-content: center; border-bottom: 1px solid #e2e2e2; flex: none; }
.gs-a { height: 26px; } .gs-b { height: 24px; } .gs-c { height: 22px; border-bottom: 0; }
.gal-more { width: 8px; height: 8px; border-top: 1px solid #666; position: relative; }
.gal-more::after { content: ""; position: absolute; left: 0; top: 2px; border-left: 4px solid transparent; border-right: 4px solid transparent; border-top: 4px solid #666; }

/* edit + save */
.edit-list { display: flex; flex-direction: column; gap: 9px; padding: 1px 0 0 13px; height: 83px; flex: none; }
.edit-item { display: flex; align-items: center; gap: 4px; height: 20px; white-space: nowrap; flex: none; }
.edit-item .dd { margin-left: 1px; }
.edit-item .dd-gap { margin-left: 9px; }
.save-body { display: flex; flex-direction: column; align-items: center; padding-top: 7px; height: 83px; flex: none; }
.save-t { text-align: center; line-height: 19px; margin-top: 6px; color: #444; white-space: nowrap; }
.collapse { position: absolute; left: 1898px; top: 102px; width: 9px; height: 9px; border-left: 1px solid #555; border-top: 1px solid #555; transform: rotate(45deg); }

/* document */
.docarea { flex: none; height: 805px; background: #f7f7f8; display: flex; overflow: hidden; }
.canvas { flex: 1; min-width: 0; padding: 30px 0 0 255px; overflow: hidden; }
.page { position: relative; width: 1388px; height: 900px; background: #fff; border: 1px solid #d2d2d2; padding-left: 210px; color: #000; }
.crop { position: absolute; width: 42px; height: 42px; top: 125px; border-bottom: 1px solid #aaa; }
.crop-l { left: 167px; border-right: 1px solid #aaa; }
.crop-r { left: 1178px; border-left: 1px solid #aaa; }
.head { position: relative; display: flex; align-items: flex-end; gap: 16px; width: 974px; height: 241px; padding: 0 0 7px 6px; border-bottom: 1px solid #8c8c8c; margin-left: -4px; }
.logo { width: 133px; height: 135px; flex: none; }
.logo-cn { font-size: 12.500px; fill: #fff; letter-spacing: 5px; font-weight: 700; }
.logo-en { font-family: "Liberation Sans", sans-serif; font-size: 14.500px; font-weight: 700; fill: #fff; letter-spacing: .6px; }
.mark { width: 162px; flex: none; }
.mark-cn { font-size: 33px; line-height: 38px; font-weight: 700; color: #8a8a8a; white-space: nowrap; margin-bottom: 1px; }
.mark-en { font-family: "Liberation Sans", sans-serif; font-size: 7.500px; line-height: 9px; letter-spacing: 2.100px; color: #999; white-space: nowrap; }

.text { font-family: "Liberation Serif", "Noto Sans CJK SC", serif; font-size: 24.500px; line-height: 47.600px; margin-top: -6px; white-space: nowrap; color: #111; }
.text b { font-weight: 400; -webkit-text-stroke: .5px #000; }
.text u { text-decoration: none; }
.line { margin: 0; height: 47.600px; }
.line-cut { padding-left: 70px; }
.lp { margin-right: 5px; }
.opts { display: grid; grid-auto-rows: 47.600px; padding-left: 26px; }
.o1 { grid-template-columns: 42px 229px 248px 232px 1fr; }
.o2 { grid-template-columns: 42px 205px 248px 230px 1fr; }
.red { color: #e60012; }
.blank { display: inline-block; width: 49px; }
.text u.sq { text-decoration: underline wavy #e0303a 1px; text-underline-offset: 4px; }
.sel { display: inline-block; background: linear-gradient(#cfcfcf, #cfcfcf) 0 7px / 100% 47px no-repeat; height: 54px; vertical-align: top; }

/* scrollbar */
.vscroll { width: 18px; margin: 3px 2px 2px 0; flex: none; display: flex; flex-direction: column; border-left: 1px solid #d0d0d0; border-right: 1px solid #d0d0d0; background: #f0f0f0; }
.sb-btn { height: 18px; flex: none; background: #fff; border: 1px solid #c6c6c6; display: flex; align-items: center; justify-content: center; margin: 0 -1px; }
.sb-thumb { height: 303px; flex: none; background: #fff; border-bottom: 1px solid #aaa; }
.sb-track { flex: 1; }
.tri-up { border-left: 5px solid transparent; border-right: 5px solid transparent; border-bottom: 5px solid #777; }
.tri-down { border-left: 5px solid transparent; border-right: 5px solid transparent; border-top: 5px solid #777; }

/* status bar */
.status { height: 28px; flex: none; background: #fff; border-top: 1px solid #d8d8d8; display: flex; align-items: center; font-size: 15px; color: #444; padding-bottom: 2px; }
.st { white-space: nowrap; }
.st-page { margin-left: 10px; letter-spacing: .35px; }
.st-count { margin-left: 25px; letter-spacing: .3px; }
.st-proof { margin-left: 22px; }
.st-lang { margin-left: 22px; }
.st-right { margin-left: auto; height: 28px; margin-bottom: -2px; display: flex; align-items: center; padding-right: 10px; }
.st-on { background: #d0d5d2; }
.zoom-minus { width: 10px; height: 1px; background: #444; margin-left: 8px; }
.slider { position: relative; width: 125px; height: 1px; background: #aaa; margin-left: 6px; }
.slider-mid { position: absolute; left: 62px; top: -4px; width: 1px; height: 9px; background: #aaa; }
.slider-thumb { position: absolute; left: 66px; top: -7px; width: 6px; height: 14px; background: #666; }
.zoom-plus { position: relative; width: 10px; height: 1px; background: #444; margin-left: 6px; }
.zoom-plus::after { content: ""; position: absolute; left: 4.500px; top: -4.500px; width: 1px; height: 10px; background: #444; }
.st-zoom { margin-left: 17px; font-size: 15px; }

/* mini toolbar */
.mini { position: absolute; left: 780px; top: 456px; width: 353px; height: 85px; background: #fff; border: 1px solid #d8d8d8; box-shadow: 0 1px 3px rgba(0,0,0,.15); padding: 8px 0 0 3px; display: flex; flex-direction: column; gap: 8px; color: #666; }
.combo-m { border-color: #d4d4d4; color: #444; }
.sty-cell svg { margin-left: 12px; flex: none; }
.mini-t { color: #666; line-height: 20px; white-space: nowrap; text-align: center; padding-bottom: 3px; }
.mini-2 { height: 44px; align-self: center; padding-bottom: 2px; }
.ibeam { position: absolute; left: 868px; top: 557px; width: 6px; height: 16px; border-top: 1px solid #333; border-bottom: 1px solid #333; }
.ibeam::after { content: ""; position: absolute; left: 2.500px; top: 0; width: 1px; height: 14px; background: #333; }

/* input method bar */
.ime { position: absolute; left: 1680px; top: 938px; width: 227px; height: 30px; background: #fff; border: 1px solid #a9a9b5; display: flex; align-items: center; padding-left: 13px; gap: 5.500px; }
.ime-s { position: absolute; left: -27px; top: -4px; width: 33px; height: 33px; background: #f4571c; color: #fff; font-family: "Liberation Sans", sans-serif; font-weight: 700; font-size: 30px; line-height: 33px; text-align: center; transform: rotate(-14deg); border-radius: 3px; }
.ime-zh { font-size: 19px; font-weight: 700; color: #1f78d1; line-height: 20px; }
.ime-p { font-size: 18px; font-weight: 700; color: #1f78d1; width: 22px; line-height: 20px; text-align: center; }
```
